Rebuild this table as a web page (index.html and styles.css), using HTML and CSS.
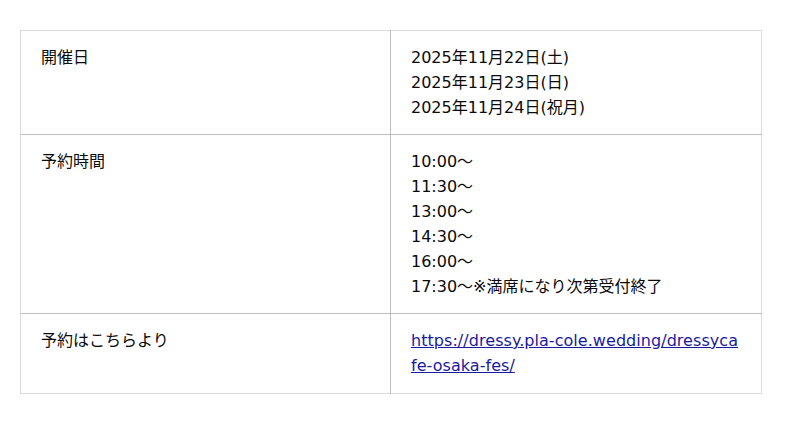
FILE: index.html
```html
<!DOCTYPE html>
<html lang="ja">
<head>
<meta charset="utf-8">
<link rel="stylesheet" href="styles.css">
</head>
<body>
<div class="wrap">
<table class="info">
<colgroup><col class="c1"><col class="c2"></colgroup>
<tr>
<td class="label">開催日</td>
<td class="value">2025年11月22日(土)<br>2025年11月23日(日)<br>2025年11月24日(祝月)</td>
</tr>
<tr>
<td class="label">予約時間</td>
<td class="value">10:00～<br>11:30～<br>13:00～<br>14:30～<br>16:00～<br>17:30～※満席になり次第受付終了</td>
</tr>
<tr class="last">
<td class="label">予約はこちらより</td>
<td class="value"><a class="link" href="#">https://dressy.pla-cole.wedding/dressycafe-osaka-fes/</a></td>
</tr>
</table>
</div>
</body>
</html>
```

FILE: styles.css
```css
html, body {
  margin: 0;
  padding: 0;
  background: #fff;
}
body {
  font-family: "DejaVu Sans", "Noto Sans CJK JP", sans-serif;
  font-size: 16px;
  line-height: 25px;
  color: #0a0a0a;
}
.wrap {
  padding: 30px 38px 0 20px;
}
.info {
  width: 742px;
  border-collapse: collapse;
  border: 1px solid #dcdcdc;
  table-layout: fixed;
}
.c1 {
  width: 370px;
}
.info td {
  vertical-align: top;
  padding: 14px 20px 14px 20px;
}
.info tr.last td {
  padding-bottom: 15px;
}
.info td + td {
  border-left: 1px solid #bdbdbd;
}
.info tr + tr td {
  border-top: 1px solid #bdbdbd;
}
.value {
  word-break: break-all;
}
.link {
  color: #1a1aa0;
  text-decoration: underline;
  letter-spacing: 0.05px;
}
```
